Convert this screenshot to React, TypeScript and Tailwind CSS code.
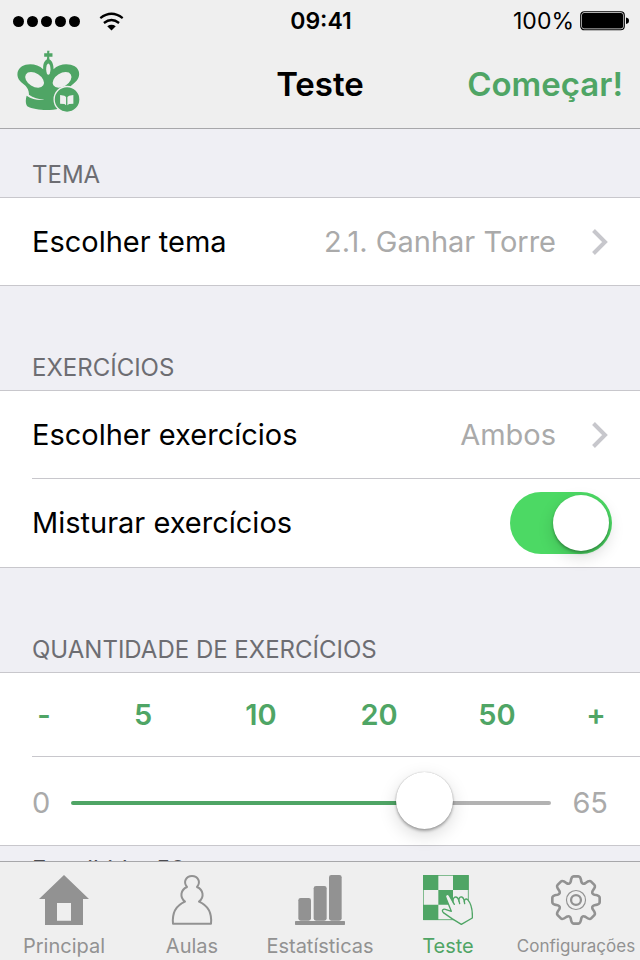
import { useState } from 'react'
import type { ReactNode } from 'react'

const MAX_EXERCISES = 65
const PRESETS = [5, 10, 20, 50]

function WifiIcon() {
  return (
    <svg viewBox="294 31 76 57" className="h-[19px] w-[25px]" fill="none" stroke="#000" strokeWidth="7">
      <path d="M298 49 Q332 23 366 49" />
      <path d="M309 64 Q332 46 355 64" />
      <path d="M319 74 Q332 65 345 74 L332 87Z" fill="#000" stroke="none" />
    </svg>
  )
}

function BatteryIcon() {
  return (
    <svg viewBox="0 0 49 20" className="h-5 w-[49px]">
      <rect x="0.75" y="0.75" width="43.5" height="18" rx="3.5" fill="none" stroke="#000" strokeWidth="1.2" />
      <rect x="2" y="2" width="41" height="15.5" rx="2" />
      <path d="M46 6.5 Q49 7 49 9.75 Q49 12.5 46 13Z" />
    </svg>
  )
}

function CrownLogo() {
  return (
    <svg viewBox="50 150 190 190" className="h-[63px] w-[63px]" fill="#4fa565">
      <path d="M141 152h7l-1 8h10v10h-10l1 10h-8l1-10h-9v-10h9z" />
      <path d="M129 208 C112 190 80 190 65 199 C48 210 48 229 58 242 C68 255 87 259 86 285 C98 294 116 299 133 300 C112 302 96 299 79 288 C75 302 76 312 81 320 C104 333 152 334 176 327 L208 285 C201 259 221 254 231 241 C241 228 240 209 224 199 C208 190 177 190 160 208 C161 194 155 178 144 178 C133 178 128 194 129 208Z" />
      <ellipse cx="144.500" cy="208" rx="6.500" ry="17" fill="#efefef" />
      <ellipse cx="103" cy="240" rx="31" ry="20" transform="rotate(32 103 240)" fill="#efefef" />
      <ellipse cx="186" cy="240" rx="31" ry="20" transform="rotate(-32 186 240)" fill="#efefef" />
      <circle cx="201" cy="299" r="39" stroke="#efefef" strokeWidth="4" />
      <path d="M180 286 L193 288 L198 292 V317 L193 313 L180 312Z M220 286 L207 288 L202 292 V317 L207 313 L220 312Z" fill="#efefef" />
    </svg>
  )
}

function Chevron() {
  return (
    <svg viewBox="0 0 16 26" className="h-[26px] w-4 shrink-0" fill="none" stroke="#c7c7cc" strokeWidth="4">
      <path d="M1.500 1.500 L13 13 L1.500 24.500" />
    </svg>
  )
}

function HomeIcon() {
  return (
    <svg viewBox="117 75 150 150" className="size-[50px]" fill="currentColor">
      <path fillRule="evenodd" d="M192 75 L267 147 H249 V225 H135 V147 H117Z M171 159 V212 H213 V159Z" />
    </svg>
  )
}

function PawnIcon() {
  return (
    <svg viewBox="498 75 150 150" className="size-[50px]" fill="none" stroke="currentColor" strokeWidth="6" strokeLinejoin="round">
      <path d="M558 111 C545 95 556 78 573 78 C590 78 601 95 588 111 C607 119 611 142 594 155 C622 167 633 190 630 221 H516 C513 190 524 167 552 155 C535 142 539 119 558 111Z" />
    </svg>
  )
}

function StatsIcon() {
  return (
    <svg viewBox="162 75 150 150" className="size-[50px]" fill="currentColor">
      <rect x="172" y="144" width="38" height="68" rx="7" />
      <rect x="218" y="108" width="39" height="104" rx="7" />
      <rect x="264" y="75" width="38" height="137" rx="7" />
      <rect x="162" y="213" width="150" height="12" rx="2" />
    </svg>
  )
}

function BoardIcon() {
  return (
    <svg viewBox="66 75 150 150" className="size-[50px]" fill="currentColor">
      <path d="M66 75H112V120H66Z M156 75H203V120H156Z M112 120H156V164H112Z M66 164H112V210H66Z" />
      <path d="M67 76H202V209H67Z" fill="none" stroke="currentColor" strokeWidth="2.500" />
      <path
        d="M134 142 C132 134 140 130 145 137 L157 158 C155 148 158 141 164 141 C169 141 172 146 174 153 C173 144 177 140 182 141 C187 142 189 148 190 155 C190 147 196 145 200 149 C210 160 215 178 214 204 L181 223 L153 206 L127 188 C121 181 126 176 133 178 L151 184 Z"
        fill="#efefef"
        stroke="currentColor"
        strokeWidth="4"
        strokeLinejoin="round"
      />
      <path d="M157 158L160 163M174 153L176 161M190 155L191 161" stroke="currentColor" strokeWidth="4" strokeLinecap="round" />
    </svg>
  )
}

// outline of the gear: one tooth, turned eight times
function gearPath() {
  const parts: string[] = []
  for (let k = 0; k < 8; k++) {
    const a = (k * Math.PI) / 4
    const p = (x: number, y: number) =>
      `${(x * Math.cos(a) - y * Math.sin(a)).toFixed(1)} ${(x * Math.sin(a) + y * Math.cos(a)).toFixed(1)}`
    parts.push(`${k === 0 ? 'M' : 'L'}${p(-16, -56)} Q${p(-14, -72)} ${p(-7, -72)} L${p(7, -72)} Q${p(14, -72)} ${p(16, -56)} Q${p(19, -46)} ${p(28.3, -50.9)}`)
  }
  return parts.join(' ') + 'Z'
}

function GearIcon() {
  return (
    <svg viewBox="-76 -76 152 152" className="size-[50px]" fill="none" stroke="currentColor">
      <path d={gearPath()} strokeWidth="8" strokeLinejoin="round" />
      <circle r="29" strokeWidth="3.500" />
      <circle r="15" strokeWidth="7" />
    </svg>
  )
}

function SectionTitle({ children, first }: { children: ReactNode; first?: boolean }) {
  return (
    <h2 className={`flex items-end px-8 pb-2 text-2xl leading-7 text-[#6d6d72] ${first ? 'h-[68px]' : 'h-[104px]'}`}>
      {children}
    </h2>
  )
}

function PickerRow({ label, value }: { label: string; value: string }) {
  return (
    <button type="button" className="flex h-[87px] w-full items-center px-8 text-left">
      <span className="flex-1">{label}</span>
      <span className="mr-9 text-[#aaaaaa]">{value}</span>
      <Chevron />
    </button>
  )
}

const TABS = [
  { label: 'Principal', icon: <HomeIcon /> },
  { label: 'Aulas', icon: <PawnIcon /> },
  { label: 'Estatísticas', icon: <StatsIcon /> },
  { label: 'Teste', icon: <BoardIcon /> },
  { label: 'Configurações', icon: <GearIcon /> },
]

export default function App() {
  const [tab, setTab] = useState('Teste')
  const [shuffle, setShuffle] = useState(true)
  const [count, setCount] = useState(50)

  const clamp = (n: number) => Math.max(0, Math.min(MAX_EXERCISES, n))
  const fill = (count / MAX_EXERCISES) * 100

  return (
    <div className="flex h-screen flex-col bg-[#efeff4] font-[Inter,sans-serif] text-black">
      <header className="shrink-0 border-b border-[#a7a7aa] bg-[#efefef]">
        {/* status bar */}
        <div className="grid h-[42px] grid-cols-3 items-center pr-[11px] pl-[13px] text-[23px] leading-7">
          <div className="flex items-center gap-[3px]">
            {[0, 1, 2, 3, 4].map((i) => (
              <span key={i} className="size-[11px] rounded-full bg-black" />
            ))}
            <span className="ml-4">
              <WifiIcon />
            </span>
          </div>
          <span className="text-center font-semibold">09:41</span>
          <div className="flex items-center justify-end gap-1.5">
            <span>100%</span>
            <BatteryIcon />
          </div>
        </div>

        {/* nav bar */}
        <div className="grid h-[86px] grid-cols-[1fr_auto_1fr] items-center px-[17px] text-[33px] font-semibold">
          <button type="button" aria-label="Início" className="mt-2 self-start justify-self-start">
            <CrownLogo />
          </button>
          <h1>Teste</h1>
          <button type="button" className="justify-self-end text-[#4fa565]">Começar!</button>
        </div>
      </header>

      <main className="min-h-0 flex-1 overflow-y-auto text-[29px] [scrollbar-width:none]">
        <section>
          <SectionTitle first>TEMA</SectionTitle>
          <div className="border-y border-[#c8c7cc] bg-white">
            <PickerRow label="Escolher tema" value="2.1. Ganhar Torre" />
          </div>
        </section>

        <section>
          <SectionTitle>EXERCÍCIOS</SectionTitle>
          <div className="border-y border-[#c8c7cc] bg-white">
            <PickerRow label="Escolher exercícios" value="Ambos" />
            <div className="ml-8 border-t border-[#c8c7cc]" />
            <div className="flex h-[88px] items-center justify-between pr-7 pl-8">
              <label htmlFor="shuffle">Misturar exercícios</label>
              <input
                id="shuffle"
                type="checkbox"
                checked={shuffle}
                onChange={(e) => setShuffle(e.target.checked)}
                className="flex h-[62px] w-[102px] appearance-none items-center rounded-full bg-gray-200 px-[3px] before:size-14 before:rounded-full before:bg-white before:shadow-[0_6px_16px_rgba(0,0,0,0.15),0_2px_3px_rgba(0,0,0,0.3)] checked:justify-end checked:bg-[#4cd964]"
              />
            </div>
          </div>
        </section>

        <section>
          <SectionTitle>QUANTIDADE DE EXERCÍCIOS</SectionTitle>
          <div className="border-y border-[#c8c7cc] bg-white">
            <div className="grid h-[83px] grid-cols-[80px_repeat(4,1fr)_80px] px-1 font-semibold text-[#4fa565]">
              <button type="button" onClick={() => setCount(clamp(count - 1))}>-</button>
              {PRESETS.map((n) => (
                <button key={n} type="button" onClick={() => setCount(n)}>{n}</button>
              ))}
              <button type="button" onClick={() => setCount(clamp(count + 1))}>+</button>
            </div>
            <div className="ml-8 border-t border-[#c8c7cc]" />
            <div className="flex h-[88px] items-center px-8 pt-1 text-[#aaaaaa]">
              <label htmlFor="count" className="w-[39px]">0</label>
              <input
                id="count"
                type="range"
                min={0}
                max={MAX_EXERCISES}
                value={count}
                onChange={(e) => setCount(Number(e.target.value))}
                style={{ backgroundImage: `linear-gradient(to right, #4fa565 ${fill}%, #b2b2b2 ${fill}%)` }}
                className="h-1 min-w-0 flex-1 appearance-none rounded-full [&::-webkit-slider-runnable-track]:h-1 [&::-webkit-slider-thumb]:-mt-[29px] [&::-webkit-slider-thumb]:size-[57px] [&::-webkit-slider-thumb]:appearance-none [&::-webkit-slider-thumb]:rounded-full [&::-webkit-slider-thumb]:bg-white [&::-webkit-slider-thumb]:shadow-[0_6px_18px_rgba(0,0,0,0.15),0_2px_3px_rgba(0,0,0,0.3),0_0_1px_rgba(0,0,0,0.3)]"
              />
              <span className="w-[57px] text-right">{MAX_EXERCISES}</span>
            </div>
          </div>
          <p className="px-8 pt-2.5 pb-6 text-2xl leading-7 text-[#4c4c50]">Escolhido: {count}</p>
        </section>
      </main>

      <nav className="grid h-[99px] shrink-0 grid-cols-5 border-t border-[#a7a7aa] bg-[#efefef]">
        {TABS.map((t) => (
          <button
            key={t.label}
            type="button"
            onClick={() => setTab(t.label)}
            className={`flex flex-col items-center gap-[9px] pt-[13px] leading-6 ${t.label.length > 12 ? 'text-[17px]' : 'text-[20px]'} ${tab === t.label ? 'text-[#4fa565]' : 'text-[#929292]'}`}
          >
            {t.icon}
            <span>{t.label}</span>
          </button>
        ))}
      </nav>
    </div>
  )
}
